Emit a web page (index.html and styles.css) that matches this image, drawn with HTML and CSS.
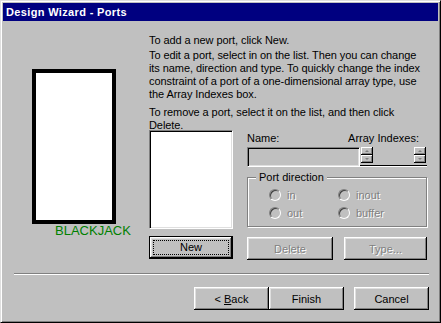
FILE: index.html
```html
<!DOCTYPE html>
<html lang="en">
<head>
    <meta charset="UTF-8">
    <title>Design Wizard - Ports</title>
    <link rel="stylesheet" href="styles.css">
</head>
<body>
    <div class="window">
        <!-- Barra de título -->
        <div class="titlebar">Design Wizard - Ports</div>

        <div class="top">
            <div class="preview">
                <div class="card"></div>
                <div class="card-name">BLACKJACK</div>
            </div>

            <div class="main">
                <p class="p1">To add a new port, click New.</p>
                <p class="p2">To edit a port, select in on the list. Then you can change<br>its name, direction and type. To quickly change the index<br>constraint of a port of a one-dimensional array type, use<br>the Array Indexes box.</p>
                <p class="p3">To remove a port, select it on the list, and then click<br>Delete.</p>

                <div class="editor">
                    <div class="list-col">
                        <div class="listbox"></div>
                        <button class="btn default"><span class="focus">New</span></button>
                    </div>

                    <div class="form">
                        <div class="labels"><span>Name:</span><span>Array Indexes:</span></div>
                        <div class="fields">
                            <div class="name-input"></div>
                            <div class="array">
                                <div class="spin"><i class="up"></i><i class="down"></i></div>
                                <div class="spin"><i class="up"></i><i class="down"></i></div>
                            </div>
                        </div>

                        <fieldset class="group">
                            <legend>Port direction</legend>
                            <div class="radios">
                                <div class="radio"><i></i>in</div>
                                <div class="radio"><i></i>inout</div>
                                <div class="radio"><i></i>out</div>
                                <div class="radio"><i></i>buffer</div>
                            </div>
                        </fieldset>

                        <div class="form-buttons">
                            <button class="btn disabled btn-delete">Delete</button>
                            <button class="btn disabled btn-type">Type...</button>
                        </div>
                    </div>
                </div>
            </div>
        </div>

        <div class="sep"></div>

        <div class="footer">
            <button class="btn">&lt; <u>B</u>ack</button>
            <button class="btn">Finish</button>
            <button class="btn btn-cancel">Cancel</button>
        </div>
    </div>
</body>
</html>
```

FILE: styles.css
```css
body {
    margin: 0;
    padding: 0;
    background-color: #c0c0c0;
}
.window {
    width: 441px;
    height: 323px;
    box-sizing: border-box;
    background: #c0c0c0;
    border: 1px solid;
    border-color: #dfdfdf #000 #000 #dfdfdf;
    box-shadow: inset 1px 1px #fff, inset -1px -1px #808080;
    padding: 2px;
    font: 11px "Liberation Sans", Arial, sans-serif;
    color: #000;
}
.titlebar {
    height: 18px;
    line-height: 18px;
    background: #000080; /* Azul Win95 */
    color: #fff;
    font-weight: bold;
    letter-spacing: 0.35px;
    padding-left: 3px;
}
.top {
    display: flex;
    height: 252px;
}
.preview {
    width: 146px;
    box-sizing: border-box;
    padding: 48px 0 0 29px;
}
.card {
    width: 84px;
    height: 155px;
    box-sizing: border-box;
    border: 4px solid #000;
    background: #fff;
}
.card-name {
    margin-left: 23px;
    color: #008000;
    font-size: 13px;
    line-height: 13px;
}
.main {
    padding-top: 13px;
}
p {
    margin: 0;
    line-height: 13px;
    white-space: nowrap;
    letter-spacing: -0.08px;
}
.p1 { margin-bottom: 2px; }
.p2 { margin-bottom: 5px; }
.p3 { margin-bottom: -2px; }

.editor {
    display: flex;
    gap: 14px;
}
.listbox {
    width: 84px;
    height: 99px;
    box-sizing: border-box;
    background: #fff;
    border: 1px solid;
    border-color: #808080 #fff #fff #808080;
    box-shadow: inset 1px 1px #000, inset -1px -1px #dfdfdf;
}
.btn {
    font: inherit;
    color: #000;
    background: #c0c0c0;
    border: none;
    width: 75px;
    height: 23px;
    padding: 0;
    box-shadow: inset -1px -1px #000, inset 1px 1px #fff, inset -2px -2px #808080, inset 2px 2px #dfdfdf;
}
.btn.default {
    border: 1px solid #000;
}
.list-col .btn {
    margin-top: 7px;
    width: 84px;
}
.focus {
    display: block;
    margin: 0 3px;
    height: 13px;
    line-height: 13px;
    border: 1px dotted #000;
}
.btn.disabled {
    color: #808080;
    text-shadow: 1px 1px #fff;
}
.form {
    width: 180px;
}
.labels {
    display: flex;
    justify-content: space-between;
    margin-top: 2px;
    padding-right: 8px;
    line-height: 13px;
}
.fields {
    display: flex;
    margin-top: 2px;
}
.name-input {
    width: 113px;
    height: 20px;
    box-sizing: border-box;
    border: 1px solid;
    border-color: #808080 #fff #fff #808080;
    box-shadow: inset 1px 1px #000, inset -1px -1px #dfdfdf;
}
.array {
    flex: 1;
    height: 18px;
    display: flex;
    justify-content: space-between;
    padding: 0 1px;
    border-bottom: 1px solid #000;
    box-shadow: 0 1px #fff;
}
.spin {
    width: 12px;
    display: flex;
    flex-direction: column;
}
.spin i {
    height: 8px;
    display: flex;
    align-items: center;
    justify-content: center;
    box-shadow: inset -1px -1px #000, inset 1px 1px #fff, inset -2px -2px #808080;
}
.spin .up::after {
    content: "";
    border: 2px solid transparent;
    border-top: 0;
    border-bottom: 2px solid #808080;
}
.spin .down::after {
    content: "";
    border: 2px solid transparent;
    border-bottom: 0;
    border-top: 2px solid #808080;
}
.group {
    margin: 4px 0 0;
    padding: 0;
    border: 1px solid #808080;
    box-shadow: inset 1px 1px #fff, 1px 1px #fff;
}
.group legend {
    margin-left: 8px;
    padding: 0 3px;
    line-height: 13px;
    background: #c0c0c0;
}
.radios {
    display: grid;
    grid-template-columns: 69px auto;
    row-gap: 6px;
    padding: 5px 0 7px 21px;
}
.radio {
    display: flex;
    align-items: center;
    gap: 6px;
    height: 12px;
    color: #808080;
    text-shadow: 1px 1px #fff;
}
.radio i {
    width: 12px;
    height: 12px;
    box-sizing: border-box;
    border-radius: 50%;
    border: 1px solid;
    border-color: #808080 #fff #fff #808080;
    box-shadow: inset 1px 1px #404040;
}
.form-buttons {
    display: flex;
    justify-content: space-between;
    margin-top: 10px;
}
.btn-delete { width: 86px; }
.btn-type { width: 83px; }

.sep {
    height: 1px;
    background: #808080;
    border-bottom: 1px solid #fff;
    margin: 0 9px 0 11px;
}
.footer {
    display: flex;
    justify-content: flex-end;
    margin-top: 12px;
    padding-right: 9px;
}
.btn-cancel {
    margin-left: 10px;
}
```
